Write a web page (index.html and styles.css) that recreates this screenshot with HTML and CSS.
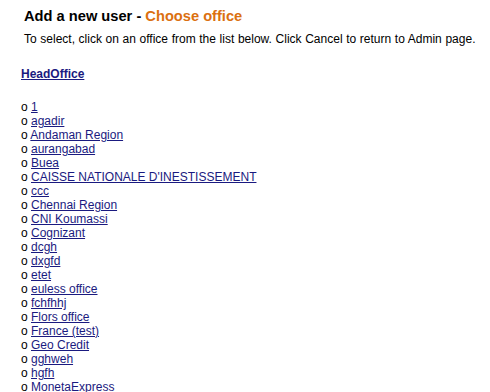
FILE: index.html
```html
<!DOCTYPE html>
<html>
<head>
<meta charset="utf-8">
<link rel="stylesheet" href="styles.css">
</head>
<body>
<div class="header">
  <h1 class="title">Add a new user - <span class="accent">Choose office</span></h1>
  <p class="intro">To select, click on an office from the list below. Click Cancel to return to Admin page.</p>
</div>
<div class="offices">
  <a class="head" href="#">HeadOffice</a>
  <ul class="list">
    <li>o <a href="#">1</a></li>
    <li>o <a href="#">agadir</a></li>
    <li>o <a href="#">Andaman Region</a></li>
    <li>o <a href="#">aurangabad</a></li>
    <li>o <a href="#">Buea</a></li>
    <li>o <a href="#">CAISSE NATIONALE D'INESTISSEMENT</a></li>
    <li>o <a href="#">ccc</a></li>
    <li>o <a href="#">Chennai Region</a></li>
    <li>o <a href="#">CNI Koumassi</a></li>
    <li>o <a href="#">Cognizant</a></li>
    <li>o <a href="#">dcgh</a></li>
    <li>o <a href="#">dxgfd</a></li>
    <li>o <a href="#">etet</a></li>
    <li>o <a href="#">euless office</a></li>
    <li>o <a href="#">fchfhhj</a></li>
    <li>o <a href="#">Flors office</a></li>
    <li>o <a href="#">France (test)</a></li>
    <li>o <a href="#">Geo Credit</a></li>
    <li>o <a href="#">gghweh</a></li>
    <li>o <a href="#">hgfh</a></li>
    <li>o <a href="#">MonetaExpress</a></li>
  </ul>
</div>
</body>
</html>
```
FILE: styles.css
```css
html, body {
  margin: 0;
  padding: 0;
  background: #ffffff;
}
body {
  font-family: "Liberation Sans", Arial, sans-serif;
  color: #000000;
  font-size: 12px;
}
.header {
  padding: 6px 0 0 24px;
}
.title {
  margin: 0;
  font-size: 14.67px;
  font-weight: bold;
  line-height: 20px;
}
.accent {
  color: #db7010;
}
.intro {
  margin: 5px 0 0 0;
  font-size: 12px;
  line-height: 16px;
  word-spacing: 0.3px;
}
.offices {
  padding: 20px 0 0 21px;
}
.head {
  font-weight: bold;
  color: #1a1a80;
  line-height: 14px;
}
.list {
  list-style: none;
  margin: 19px 0 0 0;
  padding: 0;
}
.list li {
  line-height: 14px;
}
.list a {
  color: #1a1a80;
}
```
